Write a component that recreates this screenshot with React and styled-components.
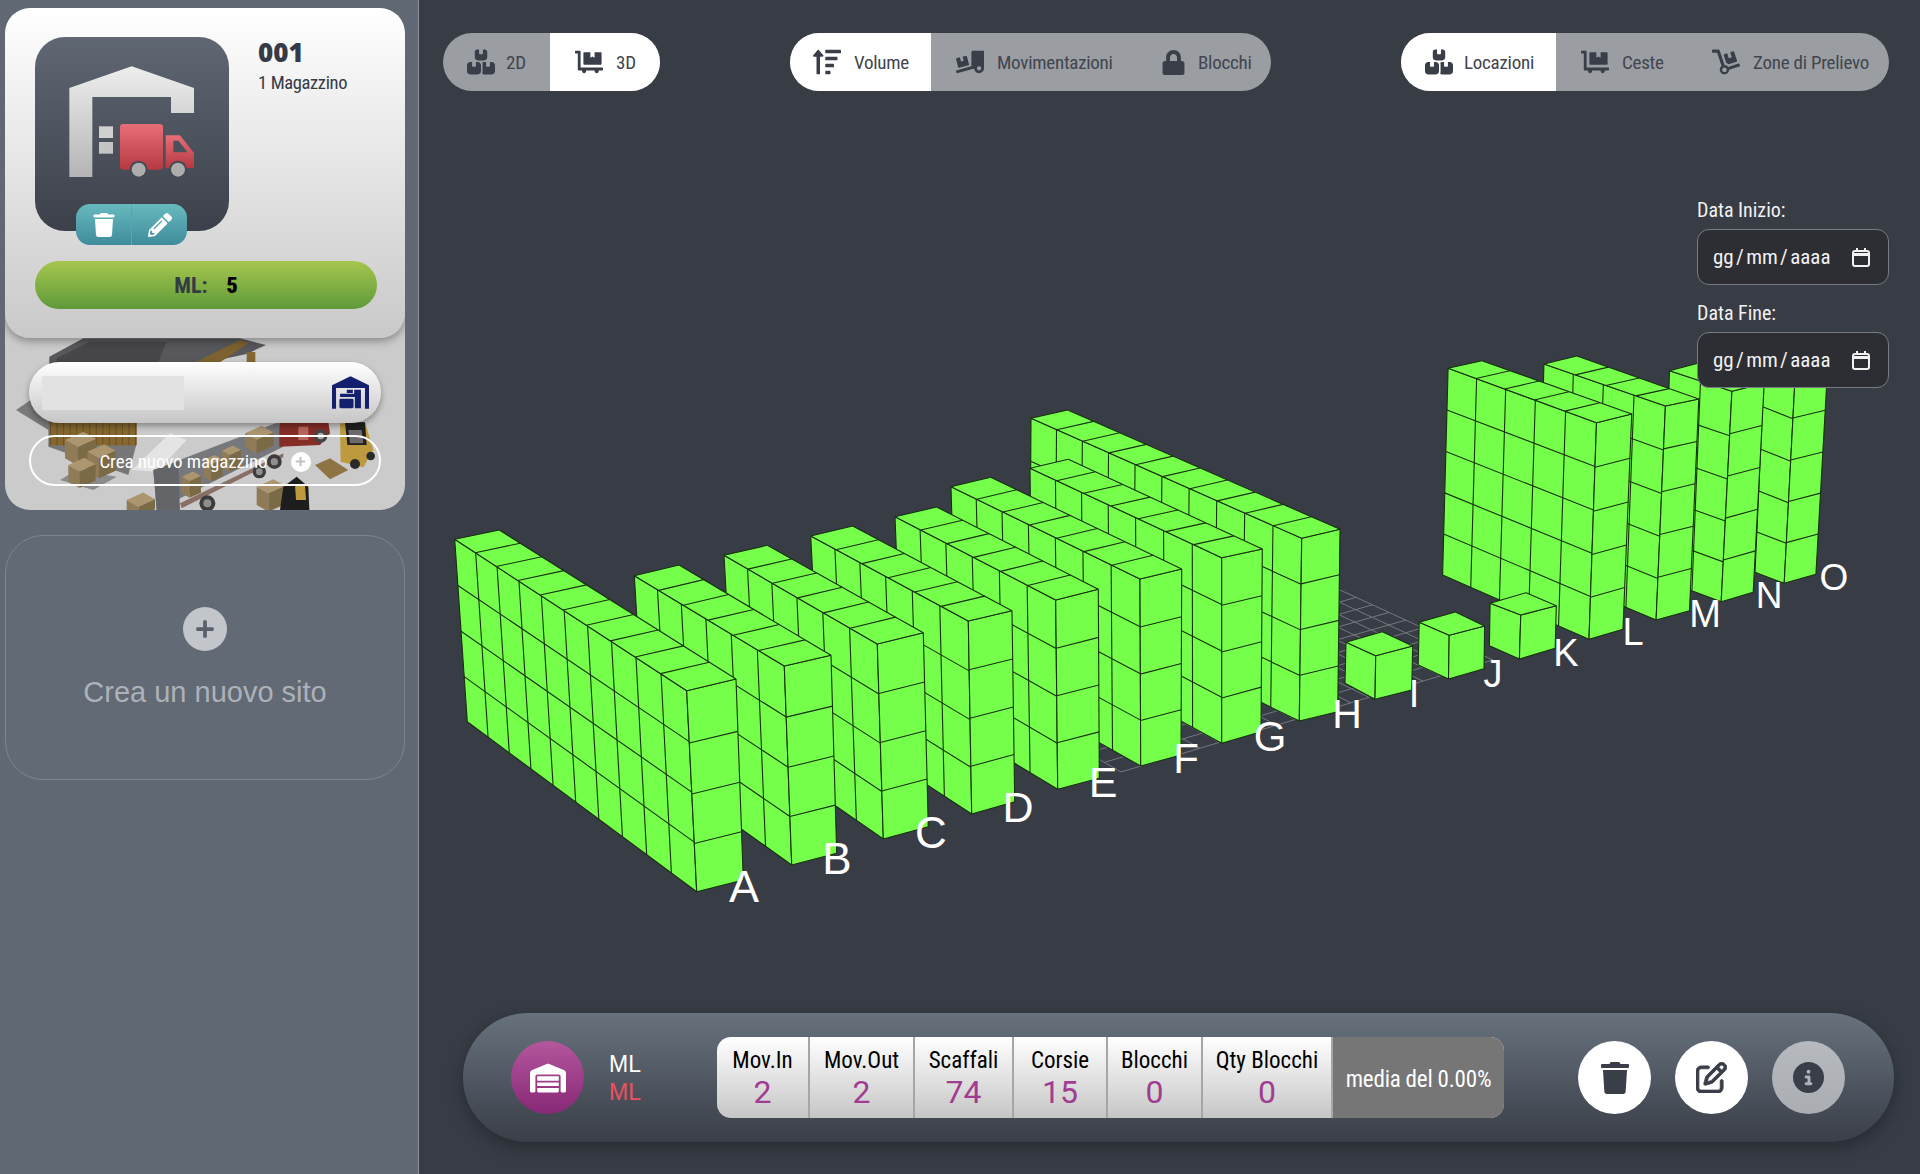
import styled, { createGlobalStyle } from 'styled-components';
import { FaDolly, FaDollyFlatbed, FaLock, FaPencilAlt, FaPlus, FaSortAmountUp, FaTrash, FaTruckLoading } from 'react-icons/fa';
import { FaBoxesStacked, FaCircleInfo, FaRegPenToSquare, FaWarehouse } from 'react-icons/fa6';

const narrow = `'Roboto Condensed', 'Liberation Sans Narrow', 'Ubuntu Condensed', Lato, sans-serif`;

const GlobalStyle = createGlobalStyle`
	html, body {
		margin: 0;
		padding: 0;
		background: #383c45;
	}
	* {
		box-sizing: border-box;
	}
`;

const Page = styled.div`
	display: flex;
	width: 1920px;
	height: 1174px;
	overflow: hidden;
	font-family: ${narrow};
`;

const Sidebar = styled.aside`
	display: flex;
	flex-direction: column;
	gap: 25px;
	width: 419px;
	padding: 8px 13px 0 5px;
	background: #606873;
	border-right: 1px solid #8f949c;
`;

const SitePanel = styled.section`
	display: flex;
	flex-direction: column;
	height: 502px;
	border-radius: 25px;
	background: #cbcbcb;
	overflow: hidden;
`;

const SiteCard = styled.div`
	position: relative;
	z-index: 1;
	height: 330px;
	flex: none;
	padding: 29px 30px 0;
	border-radius: 25px;
	background: linear-gradient(#ffffff, #c9c9c9);
	box-shadow: 0 3px 8px rgba(0, 0, 0, 0.35);
`;

const SiteHead = styled.div`
	display: flex;
	gap: 29px;
`;

const LogoTile = styled.div`
	position: relative;
	width: 194px;
	height: 194px;
	border-radius: 30px;
	background: linear-gradient(#5f6772, #3c404a);

	svg.logo {
		display: block;
	}
`;

const LogoActions = styled.div`
	position: absolute;
	left: 41px;
	top: 167px;
	display: flex;
	width: 111px;
	height: 41px;
	border-radius: 14px;
	overflow: hidden;
	background: linear-gradient(#67babe, #3f8b9b);
`;

const LogoAction = styled.button`
	flex: 1;
	display: flex;
	align-items: center;
	justify-content: center;
	padding: 0;
	border: 0;
	background: none;
	color: #fff;
	font-size: 24px;

	& + & {
		border-left: 1px solid #5aa6ae;
	}
`;

const SiteTitle = styled.div`
	color: #343a46;

	h2 {
		margin: 0;
		font-family: 'Open Sans', sans-serif;
		font-size: 26px;
		font-weight: 800;
		line-height: 30px;
	}
	p {
		margin: 4px 0 0;
		font-size: 18.5px;
		letter-spacing: -0.35px;
		line-height: 24px;
	}
`;

const MeterBar = styled.div`
	display: flex;
	align-items: center;
	justify-content: center;
	gap: 19px;
	height: 48px;
	width: 342px;
	margin-top: 30px;
	border-radius: 24px;
	background: linear-gradient(#a5c64f, #5f9a38);
	color: #343a46;
	font-size: 22px;
	font-weight: 700;

	b {
		color: #000;
	}
`;

const WarehouseArea = styled.div`
	flex: 1;
	display: grid;
	min-height: 0;

	& > * {
		grid-area: 1 / 1;
	}
`;

const WarehouseRows = styled.div`
	display: flex;
	flex-direction: column;
	gap: 12px;
	padding: 24px 24px 0;
`;

const SearchPill = styled.div`
	display: flex;
	align-items: center;
	justify-content: space-between;
	height: 61px;
	padding: 0 12px 0 13px;
	border-radius: 31px;
	background: linear-gradient(#ffffff, #c6c6c6);
	box-shadow: 0 3px 6px rgba(0, 0, 0, 0.35);
`;

const SearchBlur = styled.div`
	width: 142px;
	height: 34px;
	background: #e2e2e2;
`;

const CreatePill = styled.button`
	display: flex;
	align-items: center;
	justify-content: center;
	gap: 23px;
	height: 51px;
	padding: 2px 0 0;
	border: 2px solid #fff;
	border-radius: 26px;
	background: none;
	color: #fff;
	font-family: inherit;
	font-size: 19px;
	letter-spacing: -0.1px;
`;

const PlusDot = styled.span`
	display: flex;
	align-items: center;
	justify-content: center;
	width: 20px;
	height: 20px;
	border-radius: 50%;
	background: #fff;
	color: #c2c2c2;
	font-size: 11px;
`;

const NewSiteCard = styled.section`
	display: flex;
	flex-direction: column;
	align-items: center;
	height: 245px;
	padding-top: 71px;
	border: 1px solid #7f858e;
	border-radius: 38px;
	background: #626a75;
	color: #adb1b8;
	font-family: 'Liberation Sans', sans-serif;
	font-size: 29px;

	p {
		margin: 25px 0 0;
	}
`;

const PlusCircle = styled.span`
	display: flex;
	align-items: center;
	justify-content: center;
	width: 44px;
	height: 44px;
	border-radius: 50%;
	background: #c2c5ca;
	color: #5a606b;
	font-size: 20px;
`;

const Main = styled.main`
	flex: 1;
	display: grid;
	min-width: 0;

	& > * {
		grid-area: 1 / 1;
	}
`;

const Chart = styled.svg`
	display: block;
	width: 1501px;
	height: 1174px;
`;

const Overlay = styled.div`
	display: flex;
	flex-direction: column;
	padding: 33px 31px 32px 24px;
`;

const Toolbar = styled.div`
	display: flex;
	justify-content: space-between;
`;

const Switch = styled.div`
	display: flex;
	height: 58px;
	border-radius: 29px;
	overflow: hidden;
	background: #9a9da1;
`;

const SwitchItem = styled.div`
	display: flex;
	align-items: center;
	gap: ${(p) => p.$gap || 13}px;
	width: ${(p) => p.$w}px;
	padding-left: ${(p) => p.$pad}px;
	background: ${(p) => (p.$active ? '#fff' : 'transparent')};
	color: #41454f;
	font-size: 19px;
	letter-spacing: -0.25px;

	svg {
		flex: none;
		font-size: ${(p) => p.$size || 28}px;
		color: #3a3e48;
	}
`;

const DatePanel = styled.div`
	align-self: flex-end;
	width: 192px;
	margin-top: 104px;
	color: #f2f2f2;
	font-size: 20px;

	label {
		display: block;
		height: 34px;
		line-height: 30px;
	}
`;

const DateField = styled.div`
	display: flex;
	align-items: center;
	justify-content: space-between;
	height: 56px;
	margin-bottom: 13px;
	padding: 0 18px 0 15px;
	border: 1px solid #777b83;
	border-radius: 12px;
	background: #2d2e33;
	font-size: 21px;
	word-spacing: -2.5px;
`;

const BottomBar = styled.div`
	display: flex;
	align-items: center;
	height: 129px;
	margin: auto -5px 0 20px;
	padding: 0 49px 0 48px;
	border-radius: 65px;
	background: linear-gradient(#67727d, #3a3e48);
	box-shadow: 0 6px 18px rgba(0, 0, 0, 0.3);
`;

const SiteBadge = styled.div`
	display: flex;
	align-items: center;
	justify-content: center;
	width: 73px;
	height: 73px;
	border-radius: 50%;
	background: linear-gradient(#b4579c, #882877);
	color: #fff;
	font-size: 36px;
`;

const BadgeText = styled.div`
	width: 108px;
	margin-left: 25px;
	color: #fff;
	font-family: 'Liberation Sans', sans-serif;
	font-size: 23px;
	line-height: 28px;

	span {
		display: block;
		color: #ef5060;
	}
`;

const Stats = styled.div`
	display: flex;
	height: 81px;
	border-radius: 14px;
	overflow: hidden;
	background: linear-gradient(#ffffff, #c6c6c6);
`;

const Stat = styled.div`
	display: flex;
	flex-direction: column;
	align-items: center;
	justify-content: center;
	width: ${(p) => p.$w}px;
	padding-top: 2px;
	border-right: 2px solid #a6a6a6;
	color: #000;
	font-size: 23px;
	line-height: 28px;

	b {
		color: #a03d90;
		font-family: Roboto, sans-serif;
		font-size: 32px;
		font-weight: 400;
		line-height: 35px;
	}
`;

const StatNote = styled.div`
	display: flex;
	align-items: center;
	justify-content: center;
	width: 171px;
	padding-top: 3px;
	background: #767676;
	color: #fff;
	font-size: 23px;
	letter-spacing: -0.2px;
`;

const RoundActions = styled.div`
	display: flex;
	gap: 24px;
	margin-left: auto;
`;

const RoundButton = styled.button`
	display: flex;
	align-items: center;
	justify-content: center;
	width: 73px;
	height: 73px;
	padding: 0;
	border: 0;
	border-radius: 50%;
	background: ${(p) => (p.$muted ? 'rgba(255, 255, 255, 0.55)' : '#fff')};
	color: #3a3e48;
	font-size: ${(p) => p.$size}px;
`;

// rack corners as read from the picture: far/near top of the long side, end face, bottoms
const RACKS = [
	{ l: 'O', s: 37, t: [1834, 590], n: 1, h: 5, fl: [1764.6, 363.3], fr: [1798, 355], nl: [1795.2, 375.7], nr: [1827.6, 368.3], nb: [1784.2, 583.3], rb: [1815.9, 574.3], fb: [1755, 572.3] },
	{ l: 'N', s: 37, t: [1769, 608], n: 2, h: 5, fl: [1669.5, 370.7], fr: [1699.8, 362.7], nl: [1731.9, 391.3], nr: [1764.2, 383.3], nb: [1721.2, 601.7], rb: [1753.2, 592.3], fb: [1663, 580] },
	{ l: 'M', s: 38, t: [1705, 627], n: 4, h: 5, fl: [1543.9, 364], fr: [1576.9, 356], nl: [1665.4, 406], nr: [1698.8, 399], nb: [1656.1, 620], rb: [1689.5, 610.7], fb: [1539, 570.7] },
	{ l: 'L', s: 38, t: [1633, 645], n: 5, h: 5, fl: [1448.1, 368.3], fr: [1481.9, 360.7], nl: [1596.5, 422.7], nr: [1631.7, 414], nb: [1589, 639.3], rb: [1623, 629.3], fb: [1442.6, 575] },
	{ l: 'K', s: 38, t: [1566, 666], n: 1, h: 1, fl: [1490.1, 603.3], fr: [1526, 592.7], nl: [1520.8, 615], nr: [1556.3, 605.7], nb: [1519.4, 659], rb: [1555.2, 648.3], fb: [1489.4, 645.7] },
	{ l: 'J', s: 38, t: [1493, 687], n: 1, h: 1, fl: [1419.2, 622.3], fr: [1455.4, 612], nl: [1449.2, 635.3], nr: [1484.6, 626], nb: [1448.5, 679], rb: [1484, 668.7], fb: [1418.2, 665] },
	{ l: 'I', s: 38, t: [1414, 707], n: 1, h: 1, fl: [1346, 642.3], fr: [1382.3, 631.7], nl: [1375.7, 655.7], nr: [1412.7, 646], nb: [1375, 699.3], rb: [1411.7, 690], fb: [1345, 683.3] },
	{ l: 'H', s: 41, t: [1347, 728], n: 10, h: 4, fl: [1031, 418.3], fr: [1067.7, 410], nl: [1301.7, 538.3], nr: [1340, 529.3], nb: [1299.3, 721], rb: [1337.7, 711.7], fb: [1030, 590] },
	{ l: 'G', s: 42, t: [1270, 751], n: 7, h: 4, fl: [1030, 468.3], fr: [1068.3, 459.3], nl: [1221.7, 557.7], nr: [1262.3, 549], nb: [1221.7, 743.3], rb: [1261, 731.7], fb: [1032, 640] },
	{ l: 'F', s: 42, t: [1186, 773], n: 7, h: 4, fl: [951, 486.7], fr: [990.7, 477.3], nl: [1140, 579], nr: [1181.7, 569], nb: [1140.7, 766], rb: [1181, 755], fb: [956, 662] },
	{ l: 'E', s: 43, t: [1103, 797], n: 6, h: 4, fl: [895, 516.7], fr: [936.7, 507], nl: [1055.7, 600], nr: [1098.3, 589.3], nb: [1057.7, 789.3], rb: [1099.3, 778.3], fb: [902, 695] },
	{ l: 'D', s: 43, t: [1018, 822], n: 6, h: 4, fl: [810.7, 536], fr: [852.7, 526], nl: [968.3, 621], nr: [1012, 610.7], nb: [971.7, 814], rb: [1014.7, 801.7], fb: [820, 715] },
	{ l: 'C', s: 44, t: [931, 848], n: 6, h: 4, fl: [724, 555.3], fr: [767.3, 545.3], nl: [877.3, 644], nr: [923.3, 632.7], nb: [883.3, 839], rb: [928.3, 826.7], fb: [734, 735.3] },
	{ l: 'B', s: 44, t: [837, 874], n: 6, h: 4, fl: [634.3, 575.7], fr: [679, 565], nl: [784.3, 666], nr: [831, 655.3], nb: [791.7, 865], rb: [836.7, 853.3], fb: [645.7, 760.7] },
	{ l: 'A', s: 45, t: [744, 902], n: 10, h: 4, fl: [454.7, 539.3], fr: [499.3, 530], nl: [686.7, 690.7], nr: [736, 679], nb: [696.7, 891.7], rb: [743.3, 880], fb: [467.3, 721.7] },
];

const quadMap = ([p0, p1, p2, p3]) => {
	const dx1 = p1[0] - p2[0];
	const dx2 = p3[0] - p2[0];
	const sx = p0[0] - p1[0] + p2[0] - p3[0];
	const dy1 = p1[1] - p2[1];
	const dy2 = p3[1] - p2[1];
	const sy = p0[1] - p1[1] + p2[1] - p3[1];
	const den = dx1 * dy2 - dx2 * dy1;
	const g = (sx * dy2 - dx2 * sy) / den;
	const h = (dx1 * sy - sx * dy1) / den;
	return (u, v) => {
		const w = g * u + h * v + 1;
		return [
			((p1[0] - p0[0] + g * p1[0]) * u + (p3[0] - p0[0] + h * p3[0]) * v + p0[0]) / w,
			((p1[1] - p0[1] + g * p1[1]) * u + (p3[1] - p0[1] + h * p3[1]) * v + p0[1]) / w,
		];
	};
};

const range = (n) => Array.from({ length: n + 1 }, (_, i) => i / n);

const Face = ({ quad, cols, rows }) => {
	const at = quadMap(quad);
	const segs = [
		...range(cols).map((u) => [at(u, 0), at(u, 1)]),
		...range(rows).map((v) => [at(0, v), at(1, v)]),
	];
	return (
		<g>
			<polygon points={quad.map((p) => p.join(',')).join(' ')} fill="#75ff4b" />
			{segs.map(([a, b], i) => (
				<line key={i} x1={a[0]} y1={a[1]} x2={b[0]} y2={b[1]} stroke="#16300e" strokeWidth="1.1" />
			))}
		</g>
	);
};

const Rack = ({ r }) => (
	<g>
		<Face quad={[r.fl, r.nl, r.nb, r.fb]} cols={r.n} rows={r.h} />
		<Face quad={[r.nl, r.nr, r.rb, r.nb]} cols={1} rows={r.h} />
		<Face quad={[r.fl, r.fr, r.nr, r.nl]} cols={1} rows={r.n} />
	</g>
);

const FLOOR = [[980, 690], [1340, 590], [1493, 660], [1121, 772]];

const Floor = () => {
	const at = quadMap(FLOOR);
	const segs = [
		...range(20).map((u) => [at(u, 0), at(u, 1)]),
		...range(9).map((v) => [at(0, v), at(1, v)]),
	];
	return segs.map(([a, b], i) => (
		<line key={i} x1={a[0]} y1={a[1]} x2={b[0]} y2={b[1]} stroke="#74777f" strokeWidth="1" />
	));
};

const RackChart = () => (
	<Chart viewBox="419 0 1501 1174">
		<Floor />
		{RACKS.map((r) => (
			<Rack key={r.l} r={r} />
		))}
		{RACKS.map((r) => (
			<text key={r.l} x={r.t[0]} y={r.t[1]} textAnchor="middle" fill="#fff" fontFamily="Liberation Sans, sans-serif" fontSize={r.s}>
				{r.l}
			</text>
		))}
	</Chart>
);

const LogoArt = () => (
	<svg className="logo" width="194" height="194" viewBox="105 112 582 582">
		<defs>
			<linearGradient id="shed" x1="0" y1="0" x2="0" y2="1">
				<stop offset="0" stopColor="#eeeeee" />
				<stop offset="1" stopColor="#b4b4b4" />
			</linearGradient>
			<linearGradient id="truck" x1="0" y1="0" x2="0" y2="1">
				<stop offset="0" stopColor="#e76e78" />
				<stop offset="1" stopColor="#b63942" />
			</linearGradient>
		</defs>
		<polygon points="208,265 395,200 582,265 582,340 513,340 513,292 277,292 277,532 208,532" fill="url(#shed)" />
		<rect x="297" y="380" width="42" height="35" fill="#d0d0d0" />
		<rect x="297" y="427" width="42" height="35" fill="#c4c4c4" />
		<rect x="360" y="373" width="129" height="137" rx="10" fill="url(#truck)" />
		<path d="M497 407 H540 L582 460 V505 H497 Z" fill="url(#truck)" />
		<polygon points="520,423 535,423 563,458 520,458" fill="#4b505a" />
		<circle cx="416" cy="510" r="27" fill="#454953" />
		<circle cx="416" cy="510" r="21" fill="#adadad" />
		<circle cx="534" cy="510" r="27" fill="#454953" />
		<circle cx="534" cy="510" r="21" fill="#adadad" />
	</svg>
);

const ShedIcon = () => (
	<svg width="37" height="33" viewBox="0 0 110 97" fill="#14206e">
		<path d="M0 27 L55 0 L110 27 V97 H98 V35 H12 V97 H0 Z" />
		<path d="M44 40 H62 V50 H44 Z M66 40 H86 V95 H68 V62 H24 V52 H66 Z" />
		<rect x="22" y="67" width="42" height="28" rx="4" />
	</svg>
);

const CalendarIcon = () => (
	<svg width="18" height="19" viewBox="0 0 18 19" fill="none" stroke="#f2f2f2" strokeWidth="2">
		<rect x="1" y="3" width="16" height="15" rx="2" />
		<path d="M1 6.5 H17" strokeWidth="3" />
		<path d="M5 0 V3 M13 0 V3" />
	</svg>
);

const Crate = ({ x, y, w = 60, h = 50 }) => (
	<g>
		<polygon points={`${x},${y} ${x + w},${y - w * 0.45} ${x + w * 1.7},${y - w * 0.05} ${x + w * 0.7},${y + w * 0.4}`} fill="#ab9670" />
		<polygon points={`${x},${y} ${x + w * 0.7},${y + w * 0.4} ${x + w * 0.7},${y + w * 0.4 + h} ${x},${y + h}`} fill="#8f7c56" />
		<polygon points={`${x + w * 0.7},${y + w * 0.4} ${x + w * 1.7},${y - w * 0.05} ${x + w * 1.7},${y - w * 0.05 + h} ${x + w * 0.7},${y + w * 0.4 + h}`} fill="#7b6a46" />
	</g>
);

const WarehouseArt = () => (
	<svg width="400" height="172" viewBox="15 24 1200 516">
		<polygon points="48,240 100,205 200,290 145,300" fill="#7a7a7a" />
		<polygon points="145,270 410,270 410,340 385,435 145,350" fill="#777" />
		<rect x="148" y="262" width="262" height="84" fill="#85672f" />
		{range(13).map((t) => (
			<rect key={t} x={150 + t * 255} y="270" width="3" height="76" fill="#6a5024" />
		))}
		<polygon points="148,80 250,25 720,25 798,45 740,72 560,110 148,110" fill="#58585c" />
		<polygon points="170,85 270,35 500,35 470,110 170,110" fill="#47474b" />
		<polygon points="560,110 720,30 745,40 640,110" fill="#7d6230" />
		<rect x="740" y="66" width="26" height="44" fill="#846630" />
		<polygon points="395,420 510,310 560,330 470,425" fill="#e4e4e4" />
		<polygon points="180,450 230,420 350,440 280,480" fill="#8b8b8b" />
		<Crate x={195} y={330} w={55} h={55} />
		<Crate x={262} y={365} w={50} h={60} />
		<Crate x={205} y={405} w={48} h={50} />
		<polygon points="460,420 835,277 850,350 470,540" fill="#77787c" />
		<polygon points="460,420 535,395 540,540 470,540" fill="#646569" />
		<polygon points="540,520 850,370 850,382 545,535" fill="#8a6f66" />
		<Crate x={545} y={440} w={34} h={50} />
		<Crate x={610} y={390} w={34} h={50} />
		<Crate x={665} y={362} w={34} h={50} />
		<Crate x={735} y={310} w={50} h={40} />
		<polygon points="838,277 985,277 990,310 960,345 838,350" fill="#852d26" />
		<rect x="895" y="290" width="30" height="40" fill="#b8665c" />
		<circle cx="962" cy="318" r="20" fill="#444" />
		<circle cx="962" cy="318" r="10" fill="#aaa" />
		<circle cx="823" cy="395" r="22" fill="#3c3c3c" />
		<circle cx="823" cy="395" r="11" fill="#8f8f8f" />
		<circle cx="778" cy="425" r="20" fill="#3c3c3c" />
		<circle cx="778" cy="425" r="10" fill="#8f8f8f" />
		<circle cx="622" cy="520" r="24" fill="#3c3c3c" />
		<circle cx="622" cy="520" r="12" fill="#8f8f8f" />
		<polygon points="945,405 990,385 1045,420 990,448" fill="#8e7444" />
		<polygon points="1020,280 1095,277 1120,360 1090,412 1022,395" fill="#bd9a3e" />
		<polygon points="1035,277 1095,277 1100,345 1042,345" fill="#1f1f1f" />
		<polygon points="1045,300 1085,300 1090,340 1050,340" fill="#6b6b6b" />
		<circle cx="1065" cy="402" r="15" fill="#2a2a2a" />
		<circle cx="1112" cy="378" r="13" fill="#2a2a2a" />
		<Crate x={380} y={510} w={50} h={30} />
		<Crate x={770} y={470} w={50} h={55} />
		<polygon points="850,470 890,440 925,470 928,540 840,540" fill="#1d1d1d" />
		<polygon points="885,465 915,465 918,510 888,510" fill="#bd9a3e" />
	</svg>
);

const Switcher = ({ items }) => (
	<Switch>
		{items.map(({ icon: Icon, label, w, pad, active, gap, size }) => (
			<SwitchItem key={label} $w={w} $pad={pad} $active={active} $gap={gap} $size={size}>
				<Icon />
				{label}
			</SwitchItem>
		))}
	</Switch>
);

const STATS = [
	{ label: 'Mov.In', value: 2, w: 93 },
	{ label: 'Mov.Out', value: 2, w: 105 },
	{ label: 'Scaffali', value: 74, w: 99 },
	{ label: 'Corsie', value: 15, w: 94 },
	{ label: 'Blocchi', value: 0, w: 95 },
	{ label: 'Qty Blocchi', value: 0, w: 130 },
];

const App = () => (
	<Page>
		<GlobalStyle />
		<Sidebar>
			<SitePanel>
				<SiteCard>
					<SiteHead>
						<LogoTile>
							<LogoArt />
							<LogoActions>
								<LogoAction>
									<FaTrash />
								</LogoAction>
								<LogoAction>
									<FaPencilAlt />
								</LogoAction>
							</LogoActions>
						</LogoTile>
						<SiteTitle>
							<h2>001</h2>
							<p>1 Magazzino</p>
						</SiteTitle>
					</SiteHead>
					<MeterBar>
						<span>ML:</span>
						<b>5</b>
					</MeterBar>
				</SiteCard>
				<WarehouseArea>
					<WarehouseArt />
					<WarehouseRows>
						<SearchPill>
							<SearchBlur />
							<ShedIcon />
						</SearchPill>
						<CreatePill>
							Crea nuovo magazzino
							<PlusDot>
								<FaPlus />
							</PlusDot>
						</CreatePill>
					</WarehouseRows>
				</WarehouseArea>
			</SitePanel>
			<NewSiteCard>
				<PlusCircle>
					<FaPlus />
				</PlusCircle>
				<p>Crea un nuovo sito</p>
			</NewSiteCard>
		</Sidebar>
		<Main>
			<RackChart />
			<Overlay>
				<Toolbar>
					<Switcher
						items={[
							{ icon: FaBoxesStacked, label: '2D', w: 107, pad: 24, gap: 11 },
							{ icon: FaDollyFlatbed, label: '3D', w: 110, pad: 25, active: true },
						]}
					/>
					<Switcher
						items={[
							{ icon: FaSortAmountUp, label: 'Volume', w: 141, pad: 23, active: true },
							{ icon: FaTruckLoading, label: 'Movimentazioni', w: 210, pad: 25 },
							{ icon: FaLock, label: 'Blocchi', w: 130, pad: 20, size: 25, gap: 12 },
						]}
					/>
					<Switcher
						items={[
							{ icon: FaBoxesStacked, label: 'Locazioni', w: 155, pad: 24, active: true, gap: 11 },
							{ icon: FaDollyFlatbed, label: 'Ceste', w: 143, pad: 25 },
							{ icon: FaDolly, label: 'Zone di Prelievo', w: 190, pad: 13 },
						]}
					/>
				</Toolbar>
				<DatePanel>
					<label>Data Inizio:</label>
					<DateField>
						gg / mm / aaaa
						<CalendarIcon />
					</DateField>
					<label>Data Fine:</label>
					<DateField>
						gg / mm / aaaa
						<CalendarIcon />
					</DateField>
				</DatePanel>
				<BottomBar>
					<SiteBadge>
						<FaWarehouse />
					</SiteBadge>
					<BadgeText>
						ML
						<span>ML</span>
					</BadgeText>
					<Stats>
						{STATS.map((s) => (
							<Stat key={s.label} $w={s.w}>
								{s.label}
								<b>{s.value}</b>
							</Stat>
						))}
						<StatNote>media del 0.00%</StatNote>
					</Stats>
					<RoundActions>
						<RoundButton $size={32}>
							<FaTrash />
						</RoundButton>
						<RoundButton $size={31}>
							<FaRegPenToSquare stroke="currentColor" strokeWidth={14} />
						</RoundButton>
						<RoundButton $muted $size={31}>
							<FaCircleInfo />
						</RoundButton>
					</RoundActions>
				</BottomBar>
			</Overlay>
		</Main>
	</Page>
);

export default App;
